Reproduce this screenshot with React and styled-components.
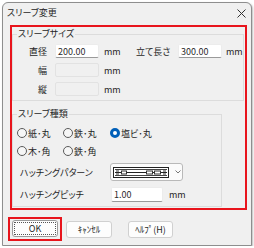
import React from 'react';
import styled, { createGlobalStyle } from 'styled-components';

const GlobalStyle = createGlobalStyle`
  body {
    margin: 0;
    background: #ffffff;
    font-family: 'Noto Sans CJK JP', 'Noto Sans', sans-serif;
    font-feature-settings: 'palt';
    font-size: 9px;
    color: #1f1f1f;
  }
  * { box-sizing: border-box; }
`;

const Window = styled.div`
  margin: 2px 0 0 2px;
  width: 250px;
  height: 244px;
  border: 1px solid #8e8e8e;
  border-radius: 6px 6px 0 0;
  background: #f0f0f0;
  box-shadow: 1px 1px 2px rgba(0, 0, 0, 0.25);
  display: flex;
  flex-direction: column;
`;

const TitleBar = styled.div`
  height: 22px;
  display: flex;
  align-items: center;
  justify-content: space-between;
  padding: 0 5px 2px 4px;
`;

const Title = styled.span`
  font-size: 9px;
  line-height: 12px;
`;

const RedFrame = styled.div`
  margin-left: 7px;
  width: 237px;
  border: 2px solid #e8141c;
  display: flex;
  flex-direction: column;
`;

const Group = styled.fieldset`
  margin: ${(p) => p.$top}px ${(p) => p.$right}px 1px 0;
  padding: ${(p) => p.$padTop}px 0 4px 0;
  border: 1px solid #dcdcdc;
  min-width: 0;
`;

const Legend = styled.legend`
  margin-left: 4px;
  padding: 0 1px;
  line-height: 12px;
  font-size: 9px;
`;

const Rows = styled.div`
  display: flex;
  flex-direction: column;
  gap: ${(p) => p.$gap}px;
  margin-top: ${(p) => p.$mt || 0}px;
`;

const Row = styled.div`
  display: flex;
  align-items: center;
  height: ${(p) => p.$h || 14}px;
  padding-left: ${(p) => p.$pad || 0}px;
`;

const Label = styled.span`
  width: ${(p) => p.$w}px;
  text-align: ${(p) => p.$align || 'left'};
  margin-right: ${(p) => p.$mr || 0}px;
  white-space: nowrap;
`;

const Input = styled.div`
  width: ${(p) => p.$w || 44}px;
  height: ${(p) => p.$h || 14}px;
  margin-left: ${(p) => p.$ml || 0}px;
  background: ${(p) => (p.$disabled ? '#f0f0f0' : '#ffffff')};
  border: 1px solid ${(p) => (p.$disabled ? '#e2e2e2' : '#ececec')};
  border-bottom-color: ${(p) => (p.$disabled ? '#e2e2e2' : '#9a9a9a')};
  border-radius: 2px;
  padding-left: 2px;
  display: flex;
  align-items: center;
  color: #2a2a2a;
`;

const Unit = styled.span`
  margin-left: ${(p) => p.$ml}px;
  ${(p) => (p.$w ? `width: ${p.$w}px;` : '')}
`;

const RadioGrid = styled.div`
  display: grid;
  grid-template-columns: 46px 47px auto;
  row-gap: 6px;
  padding-left: 4px;
`;

const RadioItem = styled.label`
  display: flex;
  align-items: center;
  height: 12px;
  gap: 1px;
  white-space: nowrap;
`;

const RadioDot = styled.span`
  width: 10px;
  height: 10px;
  border-radius: 50%;
  flex: none;
  ${(p) =>
    p.$checked
      ? `background: #ffffff; border: 3px solid #005fb8;`
      : `background: #f6f6f6; border: 1px solid #5a5a5a;`}
`;

const Combo = styled.div`
  width: 73px;
  height: 18px;
  border: 1px solid #b9b9b9;
  border-radius: 3px;
  background: #fbfbfb;
  display: flex;
  align-items: center;
  padding-left: 2px;
  gap: 6px;
`;

const ButtonRow = styled.div`
  display: flex;
  align-items: center;
  margin: 7px 0 0 5px;
`;

const FocusFrame = styled.div`
  border: 2px solid #e8141c;
  padding: 1px 2px 2px 2px;
  margin-right: 4px;
`;

const Button = styled.div`
  width: ${(p) => p.$w || 46}px;
  height: 17px;
  margin-right: ${(p) => p.$mr || 0}px;
  border: 1px solid ${(p) => (p.$focus ? '#9a9a9a' : '#d0d0d0')};
  border-radius: 3px;
  background: #fdfdfd;
  display: flex;
  align-items: center;
  justify-content: center;
  font-size: 9px;
  ${(p) => (p.$focus ? 'outline: 1px dotted #555; outline-offset: -3px;' : '')}
`;

const CloseIcon = () => (
  <svg width="9" height="9" viewBox="0 0 9 9">
    <path d="M0.5 0.5 L8.5 8.5 M8.5 0.5 L0.5 8.5" stroke="#333" strokeWidth="1" />
  </svg>
);

const HatchPattern = () => (
  <svg width="56" height="11" viewBox="0 0 56 11">
    <rect x="0.5" y="0.5" width="55" height="10" fill="#fff" stroke="#222" />
    <path d="M2 2.5 H54 M2 8.5 H54" stroke="#444" strokeWidth="1" />
    <path d="M2 5.5 H54" stroke="#222" strokeWidth="1" />
    <rect x="8.5" y="4" width="5" height="3" fill="#fff" stroke="#333" />
    <rect x="33.5" y="4" width="6" height="3" fill="#fff" stroke="#333" />
    <rect x="41.5" y="4" width="6" height="3" fill="#fff" stroke="#333" />
    <path d="M3 4 H6 M3 7 H6 M50 4 H53 M50 7 H53" stroke="#333" strokeWidth="1" />
  </svg>
);

const Chevron = () => (
  <svg width="6" height="4" viewBox="0 0 6 4">
    <path d="M0.5 0.5 L3 3 L5.5 0.5" stroke="#666" fill="none" strokeWidth="0.9" />
  </svg>
);

const radios = [
  { label: '紙･丸' },
  { label: '鉄･丸' },
  { label: '塩ビ･丸', checked: true },
  { label: '木･角' },
  { label: '鉄･角' },
];

const App = () => {
  return (
    <>
      <GlobalStyle />
      <Window>
        <TitleBar>
          <Title>スリーブ変更</Title>
          <CloseIcon />
        </TitleBar>
        <RedFrame>
          <Group $top={1} $right={1} $padTop={4}>
            <Legend>スリーブサイズ</Legend>
            <Rows $gap={5}>
              <Row>
                <Label $w={34} $align="right" $mr={8}>直径</Label>
                <Input>200.00</Input>
                <Unit $ml={5} $w={32}>mm</Unit>
                <Label $w={42}>立て長さ</Label>
                <Input>300.00</Input>
                <Unit $ml={4}>mm</Unit>
              </Row>
              <Row>
                <Label $w={34} $align="right" $mr={8}>幅</Label>
                <Input $disabled />
                <Unit $ml={5}>mm</Unit>
              </Row>
              <Row>
                <Label $w={34} $align="right" $mr={8}>縦</Label>
                <Input $disabled />
                <Unit $ml={5}>mm</Unit>
              </Row>
            </Rows>
          </Group>
          <Group $top={6} $right={23} $padTop={7}>
            <Legend>スリーブ種類</Legend>
            <RadioGrid>
              {radios.map((r) => (
                <RadioItem key={r.label}>
                  <RadioDot $checked={r.checked} />
                  {r.label}
                </RadioItem>
              ))}
            </RadioGrid>
            <Rows $gap={6} $mt={6}>
              <Row $h={18} $pad={7}>
                <Label $w={90}>ハッチングパターン</Label>
                <Combo>
                  <HatchPattern />
                  <Chevron />
                </Combo>
              </Row>
              <Row $h={15} $pad={7}>
                <Label $w={90}>ハッチングピッチ</Label>
                <Input $w={52} $h={15} $ml={1}>1.00</Input>
                <Unit $ml={6}>mm</Unit>
              </Row>
            </Rows>
          </Group>
        </RedFrame>
        <ButtonRow>
          <FocusFrame>
            <Button $focus>OK</Button>
          </FocusFrame>
          <Button $mr={16}>ｷｬﾝｾﾙ</Button>
          <Button $w={45}>ﾍﾙﾌﾟ(H)</Button>
        </ButtonRow>
      </Window>
    </>
  );
};

export default App;
